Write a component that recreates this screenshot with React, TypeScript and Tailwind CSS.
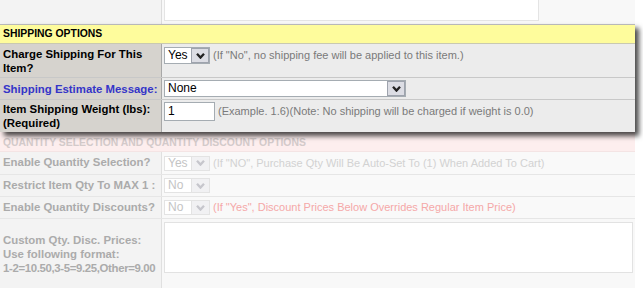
import React from "react";

function Chevron({ color }: { color: string }) {
  return (
    <svg width="9" height="6" viewBox="0 0 9 6">
      <path d="M1 0.8 L4.5 4.6 L8 0.8" fill="none" stroke={color} strokeWidth="2.3" />
    </svg>
  );
}

function Sel({
  value,
  w,
  faded,
}: {
  value: string;
  w: string;
  faded?: boolean;
}) {
  return (
    <div
      className={
        faded
          ? `${w} h-[15px] flex border border-[#e3e3e3] bg-white`
          : `${w} h-[17px] flex border border-[#a5acb2] bg-white`
      }
    >
      <span
        className={
          faded
            ? "flex-1 pl-[3px] text-[12px] leading-[13px] text-[#c4c4c4]"
            : "flex-1 pl-[3px] text-[12px] leading-[15px] text-black"
        }
      >
        {value}
      </span>
      <span
        className={
          faded
            ? "w-[18px] h-full flex items-center justify-center bg-[#f1f1f3] border-l border-[#e3e3e3]"
            : "w-[18px] h-full flex items-center justify-center bg-[#dcdde4] border border-[#9ea3ad]"
        }
      >
        <Chevron color={faded ? "#c6c6cc" : "#222"} />
      </span>
    </div>
  );
}

export default function App() {
  return (
    <div className="w-[643px] h-[288px] overflow-hidden bg-white font-['Liberation_Sans',Arial,sans-serif]">
      <div className="w-[635px]">
        {/* faded top row */}
        <div className="flex h-[24px]">
          <div className="w-[162px] shrink-0 bg-[#f3f3f3] border-r border-[#dcdcdc]" />
          <div className="flex-1 bg-[#f8f8f8] pl-[2px]">
            <div className="w-[375px] h-[21px] bg-white border border-t-0 border-[#e4e4e4]" />
          </div>
        </div>

        {/* highlighted panel */}
        <div className="relative z-10 border-t border-[#b8b8b8] shadow-[4px_4px_5px_rgba(0,0,0,0.7)]">
          <div className="h-[19px] bg-[#fefc9c] border-b border-[#c9c9b0] pl-[3px] text-[10.4px] leading-[18px] font-bold text-black">
            SHIPPING OPTIONS
          </div>

          <div className="flex h-[34px] border-b border-[#c8c8c8]">
            <div className="w-[162px] shrink-0 bg-[#d6d3ce] border-r border-[#a8a8a8] px-[3px] flex items-center text-[11.4px] leading-[14px] font-bold text-black">
              Charge Shipping For This Item?
            </div>
            <div className="flex-1 bg-[#ececec] pl-[2px] pt-[3px] flex items-start gap-[3px]">
              <Sel value="Yes" w="w-[46px]" />
              <span className="text-[11px] leading-[17px] text-[#7a7a7a]">
                (If "No", no shipping fee will be applied to this item.)
              </span>
            </div>
          </div>

          <div className="flex h-[22px] border-b border-[#c8c8c8]">
            <div className="w-[162px] shrink-0 bg-[#d6d3ce] border-r border-[#a8a8a8] px-[3px] flex items-center text-[11.4px] leading-[14px] font-bold text-[#3535c8] whitespace-nowrap">
              Shipping Estimate Message:
            </div>
            <div className="flex-1 bg-[#ececec] pl-[2px] pt-[2px] flex items-start">
              <Sel value="None" w="w-[242px]" />
            </div>
          </div>

          <div className="flex h-[32px]">
            <div className="w-[162px] shrink-0 bg-[#d6d3ce] border-r border-[#a8a8a8] px-[3px] flex items-center text-[11.4px] leading-[14px] font-bold text-black">
              Item Shipping Weight (lbs): (Required)
            </div>
            <div className="flex-1 bg-[#ececec] pl-[2px] pt-[2px] flex items-start gap-[3px]">
              <div className="w-[51px] h-[19px] bg-white border border-[#a5acb2] pl-[3px] text-[12px] leading-[17px] text-black">
                1
              </div>
              <span className="text-[11px] leading-[19px] text-[#7a7a7a]">
                (Example. 1.6)(Note: No shipping will be charged if weight is 0.0)
              </span>
            </div>
          </div>
        </div>

        {/* faded lower section */}
        <div className="h-[20px] bg-[#fdeeee] border-b border-[#f4e4e4] pl-[3px] text-[10.4px] leading-[21px] font-bold text-[#d3caca] whitespace-nowrap">
          QUANTITY SELECTION AND QUANTITY DISCOUNT OPTIONS
        </div>

        <div className="flex h-[23px] border-b border-[#e6e6e6]">
          <div className="w-[162px] shrink-0 bg-[#f3f3f3] border-r border-[#e0e0e0] px-[3px] flex items-center text-[11.4px] font-bold text-[#ababab]">
            Enable Quantity Selection?
          </div>
          <div className="flex-1 bg-[#f9f9f9] pl-[2px] flex items-center gap-[3px]">
            <Sel value="Yes" w="w-[46px]" faded />
            <span className="text-[11px] text-[#d2d2d2]">
              (If "NO", Purchase Qty Will Be Auto-Set To (1) When Added To Cart)
            </span>
          </div>
        </div>

        <div className="flex h-[22px] border-b border-[#e6e6e6]">
          <div className="w-[162px] shrink-0 bg-[#f3f3f3] border-r border-[#e0e0e0] px-[3px] flex items-center text-[11.4px] font-bold text-[#ababab]">
            Restrict Item Qty To MAX 1 :
          </div>
          <div className="flex-1 bg-[#f9f9f9] pl-[2px] flex items-center">
            <Sel value="No" w="w-[46px]" faded />
          </div>
        </div>

        <div className="flex h-[22px] border-b border-[#e6e6e6]">
          <div className="w-[162px] shrink-0 bg-[#f3f3f3] border-r border-[#e0e0e0] px-[3px] flex items-center text-[11.4px] font-bold text-[#ababab]">
            Enable Quantity Discounts?
          </div>
          <div className="flex-1 bg-[#f9f9f9] pl-[2px] flex items-center gap-[3px]">
            <Sel value="No" w="w-[46px]" faded />
            <span className="text-[11px] text-[#f5a8a8]">
              (If "Yes", Discount Prices Below Overrides Regular Item Price)
            </span>
          </div>
        </div>

        <div className="flex h-[80px]">
          <div className="w-[162px] shrink-0 bg-[#f3f3f3] border-r border-[#e0e0e0] px-[3px] pt-[14px] text-[11.4px] leading-[14px] font-bold text-[#ababab] whitespace-nowrap">
            Custom Qty. Disc. Prices:
            <br />
            Use following format:
            <br />
            <span className="tracking-[-0.35px]">1-2=10.50,3-5=9.25,Other=9.00</span>
          </div>
          <div className="flex-1 bg-[#f8f8f8] pl-[2px] pt-[3px] pr-[2px]">
            <div className="h-[51px] bg-white border border-[#e2e2e2]" />
          </div>
        </div>
      </div>
    </div>
  );
}
